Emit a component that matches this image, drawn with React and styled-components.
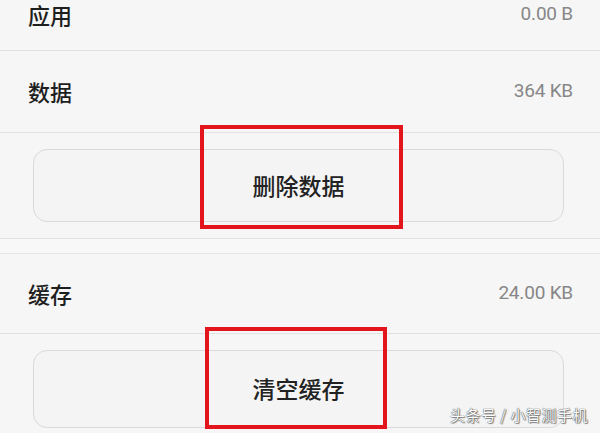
import React from "react";
import styled, { createGlobalStyle } from "styled-components";

const Global = createGlobalStyle`
  html, body { margin: 0; padding: 0; background: #f6f6f6; }
  body { font-family: "Noto Sans CJK SC", "Noto Sans", sans-serif; }
`;

const Page = styled.div`
  position: relative;
  width: 600px;
  height: 433px;
  overflow: hidden;
  background: #f6f6f6;
`;

const Row = styled.div`
  box-sizing: border-box;
  height: ${(p) => p.$h}px;
  padding: 0 27px ${(p) => p.$pb || 0}px 28px;
  display: flex;
  align-items: center;
  justify-content: space-between;
  border-bottom: 1px solid #e2e2e2;
`;

const Label = styled.span`
  font-size: 22px;
  font-weight: 500;
  color: #1e1e1e;
  line-height: 1.15;
`;

const Value = styled.span`
  font-family: Roboto, "Noto Sans", sans-serif;
  font-size: 19px;
  color: #878787;
  line-height: 1.2;
  letter-spacing: -0.2px;
`;

const ButtonArea = styled.div`
  box-sizing: border-box;
  padding: 16px 36px ${(p) => p.$pb}px 33px;
`;

const Button = styled.div`
  box-sizing: border-box;
  height: ${(p) => p.$h}px;
  border: 1px solid #dadada;
  border-radius: 14px;
  background: #f4f4f4;
  display: flex;
  align-items: center;
  justify-content: center;
  font-size: 23px;
  font-weight: 500;
  color: #222;
  padding-bottom: 2px;
`;

const SectionGap = styled.div`
  height: 14px;
  border-top: 1px solid #e2e2e2;
  border-bottom: 1px solid #e6e6e6;
  background: #f8f8f8;
`;

const Highlight = styled.div`
  position: absolute;
  box-sizing: border-box;
  border: 4px solid #e3141c;
  left: ${(p) => p.$x}px;
  top: ${(p) => p.$y}px;
  width: ${(p) => p.$w}px;
  height: ${(p) => p.$hh}px;
`;

const Watermark = styled.div`
  position: absolute;
  right: 12px;
  bottom: 8px;
  font-size: 15px;
  color: #fafafa;
  letter-spacing: 0.5px;
  text-shadow: 0 0 1px #555, 0 0 1px #555, 1px 1px 1px #888;
`;

export default function App() {
  return (
    <Page>
      <Global />
      <Row $h={51} $pb={21}>
        <Label>应用</Label>
        <Value>0.00 B</Value>
      </Row>
      <Row $h={82}>
        <Label>数据</Label>
        <Value>364 KB</Value>
      </Row>
      <ButtonArea $pb={16}>
        <Button $h={73}>删除数据</Button>
      </ButtonArea>
      <SectionGap />
      <Row $h={80}>
        <Label>缓存</Label>
        <Value>24.00 KB</Value>
      </Row>
      <ButtonArea $pb={16}>
        <Button $h={78}>清空缓存</Button>
      </ButtonArea>
      <Highlight $x={200} $y={125} $w={203} $hh={104} />
      <Highlight $x={205} $y={327} $w={182} $hh={102} />
      <Watermark>头条号 / 小智测手机</Watermark>
    </Page>
  );
}
